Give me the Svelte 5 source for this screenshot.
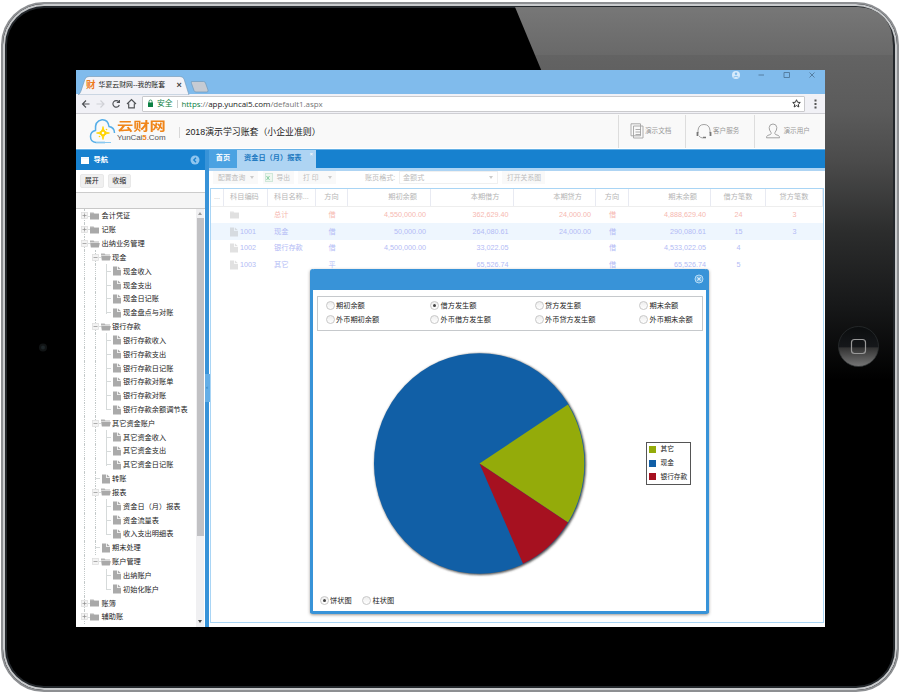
<script>
  const tree = [
    [0, '会计凭证', 'plus'], [0, '记账', 'plus'], [0, '出纳业务管理', 'minus'],
    [1, '现金', 'minus'], [2, '现金收入'], [2, '现金支出'], [2, '现金日记账'], [2, '现金盘点与对账', '', 1],
    [1, '银行存款', 'minus'], [2, '银行存款收入'], [2, '银行存款支出'], [2, '银行存款日记账'], [2, '银行存款对账单'], [2, '银行存款对账'], [2, '银行存款余额调节表', '', 1],
    [1, '其它资金账户', 'minus'], [2, '其它资金收入'], [2, '其它资金支出'], [2, '其它资金日记账', '', 1],
    [1, '转账'], [1, '报表', 'minus'], [2, '资金日（月）报表'], [2, '资金流量表'], [2, '收入支出明细表', '', 1],
    [1, '期末处理'], [1, '账户管理', 'minus', 1], [2, '出纳账户'], [2, '初始化账户', '', 1],
    [0, '账簿', 'plus'], [0, '辅助账', 'plus']
  ].map(([level, label, toggle, last], i) => ({ level, label, toggle, last, trunk: i > 2 && i < 25 }));

  const heads = ['...', '科目编码', '科目名称...', '方向', '期初余额', '本期借方', '本期贷方', '方向', '期末余额', '借方笔数', '贷方笔数'];
  const kinds = ['c', 'code', 'l', 'c', 'r', 'r', 'r', 'c', 'r', 'c', 'c'];
  const rows = [
    ['', '', '总计', '借', '4,550,000.00', '362,629.40', '24,000.00', '借', '4,888,629.40', '24', '3'],
    ['', '1001', '现金', '借', '50,000.00', '264,080.61', '24,000.00', '借', '290,080.61', '15', '3'],
    ['', '1002', '银行存款', '借', '4,500,000.00', '33,022.05', '', '借', '4,533,022.05', '4', ''],
    ['', '1003', '其它', '平', '', '65,526.74', '', '借', '65,526.74', '5', '']
  ];
  const options = ['期初余额', '借方发生额', '贷方发生额', '期末余额', '外币期初余额', '外币借方发生额', '外币贷方发生额', '外币期末余额'];
  const legend = [['其它', '#94ab0a'], ['现金', '#115fa6'], ['银行存款', '#a61120']];
</script>

{#snippet file()}
  <svg class="ficon" width="8" height="10" viewBox="0 0 8 10"><path d="M0 .5h4.2V4H8v5.500H0z M5 .5L8 3.200H5z" fill="#aaa" /></svg>
{/snippet}
{#snippet folder(open)}
  <svg class="dicon" width="10" height="8" viewBox="0 0 10 8">
    <path d="M0 .5h3.600l.8 1H9v1H0z" fill="#b4b4b4" />
    <path d={open ? 'M.2 3H9.8L8.8 7.5H.8z' : 'M0 2h9v5.5H0z'} fill="#a9a9a9" />
  </svg>
{/snippet}

<div class="tablet">
  <svg class="glare" width="900" height="696" viewBox="0 0 900 696">
    <defs>
      <linearGradient id="shine" gradientUnits="userSpaceOnUse" x1="0" y1="7" x2="0" y2="380">
        <stop offset="0" stop-color="#777" /><stop offset=".128" stop-color="#696969" />
        <stop offset=".13" stop-color="#636363" /><stop offset=".28" stop-color="#5b5b5b" />
        <stop offset=".42" stop-color="#4a4a4a" /><stop offset=".6" stop-color="#2c2d2d" />
        <stop offset=".8" stop-color="#171819" /><stop offset="1" stop-color="#000" />
      </linearGradient>
      <linearGradient id="home" x1="0" y1="0" x2="0" y2="1">
        <stop offset="0" stop-color="#0b0d0e" /><stop offset=".5" stop-color="#15171a" />
        <stop offset=".54" stop-color="#333" /><stop offset="1" stop-color="#777" />
      </linearGradient>
    </defs>
    <path d="M515 7H858Q893 9 893 46V380H670Z" fill="url(#shine)" />
    <circle cx="858.500" cy="346.500" r="20" fill="url(#home)" stroke="#2c3032" stroke-width=".7" />
    <rect x="851.500" y="339.500" width="14" height="14" rx="3" fill="none" stroke="#999" stroke-width="1.200" />
    <circle cx="43" cy="347.500" r="4" fill="#111415" /><circle cx="43" cy="347.500" r="2" fill="#1d2528" />
  </svg>

  <div class="screen">
    <div class="tabbar">
      <svg class="tabshape" width="140" height="19" viewBox="0 0 140 19">
        <path d="M2 19Q4 18 5 15L9 3Q10 .5 13 .5H104Q107 .5 108 3L113 19z" fill="#f3f3f8" stroke="#7196b4" stroke-width=".6" />
        <path d="M115.500 5.500h12q1.500 0 2 1.500l2.500 7q.5 2-1 2h-11q-1.500 0-2-1.500l-2.500-7q-.5-2 0-2z" fill="#c6cbd3" stroke="#6e9abc" stroke-width=".7" />
      </svg>
      <div class="tabtext"><b>财</b><span>华夏云财网--我的账套</span><i>×</i></div>
      <svg class="winbtns" width="90" height="12" viewBox="0 0 90 12" fill="none" stroke="#50789b" stroke-width=".9">
        <circle cx="6" cy="5" r="4" fill="#d6eafb" stroke="none" /><circle cx="6" cy="3.800" r="1.200" fill="#80bbec" stroke="none" /><path d="M3.500 7.200q2.500-2 5 0" stroke="#80bbec" />
        <path d="M28.500 5h5.500M54 2.500h5.500v5H54zM79.500 2.500l5 5m0-5l-5 5" />
      </svg>
    </div>

    <div class="addr">
      <svg width="66" height="18" viewBox="0 0 66 18" fill="none" stroke="#505256" stroke-width="1.150">
        <path d="M13.500 9H6.500M10 5.500L6.500 9l3.500 3.500" />
        <path d="M20.500 9h7.500M24.500 5.500L28 9l-3.500 3.500" stroke="#d0d1d6" />
        <path d="M42.700 6.700A3.300 3.300 0 1 0 43.300 10M43.400 5v2.500h-2.600" />
        <path d="M51 9l4.500-4.500L60 9M52.700 8.500v4.300h5.600V8.500" />
      </svg>
      <div class="field">
        <svg width="7" height="9" viewBox="0 0 7 9"><rect x="1" y="3.500" width="5" height="4.500" fill="#0b8043" /><path d="M2 4V2.500q0-1.500 1.500-1.500T5 2.500V4" fill="none" stroke="#0b8043" stroke-width=".8" /></svg>
        <span class="safe">安全</span><span class="bar"></span>
        <span class="url"><em>https</em>://<strong>app.yuncai5.com</strong>/default1.aspx</span>
        <svg class="star" width="9" height="9" viewBox="0 0 10 10"><path d="M5 .8l1.200 2.800 3 .3-2.200 2 .6 3L5 7.300 2.400 8.900l.6-3-2.200-2 3-.3z" fill="none" stroke="#333" stroke-width="1.100" /></svg>
      </div>
      <svg class="dots" width="3" height="10" viewBox="0 0 3 10" fill="#555"><path d="M.5.5h2v2h-2zM.5 4h2v2h-2zM.5 7.500h2v2h-2z" /></svg>
    </div>

    <header>
      <svg class="cloud" width="27" height="27" viewBox="0 0 27 27" fill="none">
        <path d="M16 24.500H7Q1.500 24 1.500 18.500 1.500 13.500 6.500 12.500 5.500 3 13 1.800 19 1.500 20 8.500 25.500 9.500 25.500 15" stroke="#55aee8" stroke-width="1.500" />
        <path d="M7 24.500H22" stroke="#8ac9f1" stroke-width="1" />
        <path d="M14 8.500Q14.500 14.500 20.500 15 14.500 15.500 14 21.500 13.500 15.500 7.500 15 13.500 14.500 14 8.500z" fill="#ffd400" stroke="#ffd400" stroke-width=".8" /><circle cx="14" cy="15" r="1.300" fill="#fff" />
        <circle cx="17.500" cy="11.500" r=".8" fill="#ffd400" /><circle cx="10.500" cy="18.500" r=".8" fill="#ffd400" />
      </svg>
      <div class="brand"><div class="cn">云财网</div><div class="en">YunCai<b>5</b>.Com</div></div>
      <div class="title">2018演示学习账套（小企业准则）</div>
      <div class="tool t1">
        <svg width="14" height="16" viewBox="0 0 14 16" fill="#f9f9f9" stroke="#a3a3a3" stroke-width=".9"><path d="M1 .8h9.500v12H1zM3.500 3h9.500v12H3.500zM5.500 6.500h5.500M5.500 9h5.500M5.500 11.500h5.500" /></svg><span>演示文档</span>
      </div>
      <div class="tool t2">
        <svg width="16" height="16" viewBox="0 0 16 16" fill="none" stroke="#999" stroke-width=".9"><path d="M2 10V7.500Q2.500 1.500 8 1.500T14 7.500V10M3 13q1.500 2 4 2" /><path d="M1.500 9v4M14.500 9v4" stroke="#777" stroke-width="1.800" /><path d="M7 14.500h3" stroke="#777" stroke-width="1.500" /></svg><span>客户服务</span>
      </div>
      <div class="tool t3">
        <svg width="14" height="16" viewBox="0 0 14 16" fill="none" stroke="#999" stroke-width=".9"><path d="M5 9.500Q3 7 3.200 4.500 3.500 1 7 1t3.800 3.500Q11 7 9 9.500q-.5 1.500.5 2l3 1q1 .7 1 2.300H.5q0-1.600 1-2.300l3-1q1-.5.5-2z" /></svg><span>演示用户</span>
      </div>
    </header>

    <div class="body">
      <aside>
        <div class="navhead">
          <svg width="8" height="7" viewBox="0 0 8 7"><path d="M0 0h8v7H0z" fill="#fff" /><path d="M0 1.200h8" stroke="#cde5f7" stroke-width=".5" /></svg>
          <b>导航</b>
          <svg class="coll" width="10" height="10" viewBox="0 0 10 10"><circle cx="5" cy="5" r="4.500" fill="#8fc5ee" /><path d="M6 2.700L3.800 5 6 7.300" fill="none" stroke="#1781cf" stroke-width="1.300" /></svg>
        </div>
        <div class="btns"><span>展开</span><span>收缩</span></div>
        <div class="strip"></div>
        <div class="treewrap">
          <div class="tree">
            {#each tree as n}
              <div class="node lv{n.level}" class:trunk={n.trunk} class:last={n.last}>
                <span class="guide" class:tog={n.toggle}>
                  {#if n.toggle}<svg width="7" height="7" viewBox="0 0 7 7" fill="#f3f3f3" stroke-width=".7"><rect x=".5" y=".5" width="6" height="6" stroke="#dcdcdc" /><path d={n.toggle === 'plus' ? 'M1.500 3.500h4M3.500 1.500v4' : 'M1.500 3.500h4'} stroke="#8c8c8c" /></svg>{/if}
                </span>
                {#if n.toggle}{@render folder(n.toggle === 'minus')}{:else}{@render file()}{/if}
                <span class="label">{n.label}</span>
              </div>
            {/each}
          </div>
          <div class="scroll"><i class="up"></i><div class="thumb"></div><i class="down"></i></div>
        </div>
      </aside>
      <div class="split"><div class="grip">‹</div></div>
      <main>
        <div class="tabs"><span class="home">首页</span><span class="active">资金日（月）报表<i>×</i></span></div>
        <div class="bar2">
          <span class="b wide">配置查询<u></u></span>
          <span class="b exp"><svg width="8" height="9" viewBox="0 0 8 9"><rect x=".5" y=".5" width="7" height="8" fill="#eef7ef" stroke="#d0e8da" /><path d="M1.500 3l3 4m0-4l-3 4" stroke="#8bd0a5" /></svg>导出</span>
          <span class="b prn">打 印<u></u></span>
          <span class="lab">账页格式:</span>
          <span class="combo">金额式<u></u></span>
          <span class="b rel">打开关系图</span>
        </div>
        <div class="grid">
          <div class="row head">{#each heads as h, i}<span class={kinds[i]}>{h}</span>{/each}</div>
          {#each rows as r, ri}
            <div class="row" class:total={ri === 0} class:sel={ri === 1}>
              {#each r as c, i}
                <span class={kinds[i]}>{#if i === 1}{#if ri}{@render file()}{:else}{@render folder(false)}{/if}{/if}{c}</span>
              {/each}
            </div>
          {/each}
        </div>
      </main>
    </div>

    <div class="modal">
      <div class="mhead"><svg width="10" height="10" viewBox="0 0 10 10"><circle cx="5" cy="5" r="4" fill="#5eabe3" stroke="#b4daf5" stroke-width="1" /><path d="M3.300 3.300l3.400 3.400m0-3.400L3.300 6.700" stroke="#d5eafa" stroke-width="1.100" /></svg></div>
      <div class="mbody">
        <div class="opts">{#each options as o, i}<label><i class="radio" class:on={i === 1}></i>{o}</label>{/each}</div>
        <div class="chart">
          <svg width="220" height="230" viewBox="370 350 220 230">
            <defs><filter id="soft"><feGaussianBlur stdDeviation=".8" /></filter></defs>
            <ellipse cx="480.300" cy="464.300" rx="105.800" ry="110.800" fill="#555" filter="url(#soft)" />
            <ellipse cx="479.500" cy="463.500" rx="105.500" ry="110.300" fill="#115fa6" />
            <path d="M479.500 463.500L568 404.500A105.500 110.300 0 0 1 568 522.500Z" fill="#94ab0a" />
            <path d="M479.500 463.500L568 522.500A105.500 110.300 0 0 1 523 563.800Z" fill="#a61120" />
          </svg>
          <div class="legend">{#each legend as [name, color]}<div><i style="background:{color}"></i>{name}</div>{/each}</div>
        </div>
        <div class="foot"><label><i class="radio on"></i>饼状图</label><label><i class="radio"></i>柱状图</label></div>
      </div>
    </div>
  </div>
</div>

<style>
  :global(body) { background: #fff; overflow: hidden; }
  .tablet, .tablet *, .tablet::before { box-sizing: border-box; }
  svg { flex: none; display: block; }
  .tablet { position: relative; width: 900px; height: 696px; background: #fff; padding: 70px 75px 0 76px; font: 7.2px/10px "Liberation Sans", "Noto Sans CJK SC", sans-serif; color: #222; white-space: nowrap; z-index: 0; }
  .tablet::before { content: ''; position: absolute; z-index: -2; left: 1px; top: 2px; width: 898px; height: 690px; border-radius: 43px; background: #000; border: 2px solid #8d8f92; box-shadow: inset 0 0 0 2px #c9cbcd, inset 0 0 0 4px #24282c; }
  .glare { position: absolute; left: 0; top: 0; z-index: -1; }
  .screen { position: relative; width: 749px; height: 557px; background: #fff; overflow: hidden; display: flex; flex-direction: column; }

  .tabbar { position: relative; height: 24px; background: #80bbec; flex: none; padding: 6px 0 0 8px; }
  .tabshape { position: absolute; left: 0; top: 6px; }
  .tabtext { position: relative; display: flex; align-items: center; height: 18px; color: #444; }
  .tabtext b { color: #ef7b1c; font-size: 9.500px; width: 14.500px; padding-left: 2px; }
  .tabtext span { width: 78px; font-size: 6.900px; color: #222; }
  .tabtext i { font: 700 9px/10px "Liberation Sans", sans-serif; color: #444; }
  .winbtns { position: absolute; left: 654px; top: 0; }
  .addr { height: 20px; flex: none; background: #f1f1f6; border-bottom: 1px solid #cfcfd4; display: flex; align-items: center; }
  .field { width: 663px; height: 16px; background: #fff; border: 1px solid #cacacd; border-radius: 1px; display: flex; align-items: center; padding: 0 4px 0 4px; }
  .safe { color: #0b8043; font-size: 7.800px; margin-left: 3px; width: 19.500px; }
  .bar { width: 1px; height: 8px; background: #ccc; margin-right: 4px; }
  .url { font: 8px/12px "Open Sans", sans-serif; letter-spacing: -.07px; color: #777; width: 142px; }
  .url em { font-style: normal; color: #0b8043; }
  .url strong { font-weight: 400; color: #222; }
  .star { margin-left: auto; margin-right: -1px; }
  .dots { margin-left: 9px; }

  header { height: 35px; flex: none; background: #f9f9f9; display: flex; align-items: center; border-bottom: 1px solid #fff; padding-left: 13px; }
  .brand { width: 63px; padding-left: 1px; }
  .cn { font: 700 16.300px/12px "Noto Sans CJK SC", sans-serif; color: #f08519; transform: scaleY(.76); height: 12px; }
  .en { font: 8px/8px "Liberation Sans", sans-serif; letter-spacing: -.08px; color: #555; margin-top: 1.500px; }
  .en b { color: #f08519; }
  .title { border-left: 1px solid #d8d8d8; padding-left: 5.500px; font-size: 8.900px; line-height: 11px; height: 11px; margin-top: 2px; width: 439px; color: #222; }
  .tool { border-left: 1px solid #ddd; height: 33px; display: flex; align-items: center; padding-left: 11px; color: #999; font-size: 6.600px; }
  .tool span { margin-left: 1px; }
  .t1 { width: 67px; } .t2 { width: 68.500px; padding-left: 10px; } .t3 { width: 71px; } .t3 span { margin-left: 4px; }

  .body { flex: 1; min-height: 0; display: flex; border-top: 1px solid #65b1e6; }
  aside { width: 129px; display: flex; flex-direction: column; }
  .navhead { height: 20px; flex: none; background: #1781cf; color: #fff; display: flex; align-items: center; padding: 0 5px 0 5px; }
  .navhead b { margin-left: 4.500px; font-size: 7.300px; }
  .coll { margin-left: auto; }
  .btns { height: 22px; flex: none; padding: 4px 0 0 4px; display: flex; gap: 4px; }
  .btns span { width: 23.500px; height: 14px; background: #f0f0f0; border: 1px solid #e8e8e8; border-radius: 2px; text-align: center; line-height: 12px; font-size: 7px; }
  .strip { height: 17px; flex: none; background: #f5f5f5; border-top: 1px solid #ccc; border-bottom: 1px solid #c8c8c8; }
  .treewrap { flex: 1; min-height: 0; display: flex; overflow: hidden; }
  .tree { width: 120px; padding-top: 0; }
  .node { position: relative; height: 13.830px; display: flex; align-items: center; padding-left: 5px; }
  .node.lv1 { padding-left: 16px; } .node.lv2 { padding-left: 27px; }
  .node::before { content: ''; position: absolute; left: 8px; top: 0; bottom: 0; border-left: 1px dotted #c3c9c9; }
  .node.trunk::after { content: ''; position: absolute; left: 19px; top: 0; bottom: 0; border-left: 1px dotted #c3c9c9; }
  .guide { position: relative; width: 9px; height: 13.830px; display: flex; align-items: center; z-index: 1; flex: none; }
  .guide::after { content: ''; position: absolute; left: 3px; right: 1px; top: 6.500px; border-top: 1px solid #d6dada; }
  .guide.tog::after { left: 7px; right: 0; }
  .lv2 .guide::before { content: ''; position: absolute; left: 3px; top: 0; bottom: 0; border-left: 1px solid #d6dada; }
  .lv2.last .guide::before { bottom: 6px; }
  .ficon { margin-left: 1px; width: 8px; }
  .dicon { width: 10px; }
  .label { margin-left: 1.500px; line-height: 13px; }
  .lv1 .label { margin-left: 1px; }
  .lv1 .ficon + .label, .lv2 .label { margin-left: 2px; }
  .scroll { width: 8px; background: #f0f0f2; display: flex; flex-direction: column; align-items: center; padding: 3px 0 4px; }
  .thumb { width: 7px; height: 318px; background: #c1c1c4; margin: 3px 0 auto; }
  .up { border: 2px solid transparent; border-top: 0; border-bottom: 3px solid #999; }
  .down { border: 2px solid transparent; border-bottom: 0; border-top: 3px solid #444; }
  .split { width: 4px; background: #3893d8; padding-top: 224px; }
  .grip { height: 28px; width: 5px; background: #64aee6; color: #1d6fae; font-size: 6px; line-height: 27px; padding-left: 1px; }

  main { flex: 1; min-width: 0; display: flex; flex-direction: column; padding-left: 1px; }
  .tabs { height: 20.500px; flex: none; background: #1781cf; border-bottom: 3px solid #aed4f3; display: flex; margin-left: -1px; line-height: 16px; }
  .home { width: 28px; background: #4ba2e2; color: #fff; font-weight: 700; text-align: center; }
  .active { position: relative; width: 79px; background: #aed4f3; color: #1b78c0; padding-left: 7px; font-weight: 700; height: 18px; }
  .active i { position: absolute; right: 3px; top: -4px; font: 6px/17px "Liberation Sans", sans-serif; color: #fff; }
  .bar2 { height: 17.500px; flex: none; display: flex; align-items: center; color: #bdbdbd; font-size: 6.800px; padding: 0 0 3px 3px; }
  .b { background: #f9f9f9; height: 13px; line-height: 13px; display: flex; align-items: center; padding-left: 5px; flex: none; }
  .wide { width: 45px; } .exp { width: 31px; margin-left: 5px; padding-left: 2px; gap: 3.500px; } .prn { width: 38px; margin-left: 4px; }
  u { border: 2px solid transparent; border-top: 3px solid #ccc; border-bottom: 0; margin-left: auto; margin-right: 4px; }
  .lab { width: 34px; margin-left: 29px; font-size: 7.100px; }
  .combo { width: 99px; height: 13px; border: 1px solid #f0f0f0; padding-left: 3px; display: flex; align-items: center; font-size: 7.100px; }
  .rel { width: 43px; margin-left: 4px; }
  .grid { flex: 1; margin: 0 1px 4px 0; border: 1px solid #a9d5f5; }
  .row { display: grid; grid-template-columns: 13px 44px 48px 32px 83px 82.500px 82.500px 33px 82px 55px 57px; height: 16.700px; align-items: center; color: #b3bbf5; }
  .row > span { height: 100%; display: flex; align-items: center; }
  .row.head { height: 17.500px; color: #b5b5b5; border-bottom: 1px solid #eee; }
  .head > span { border-right: 1px solid #e8eaf2; }
  .row.total { color: #f6b8b0; }
  .row.sel { background: #eef6fe; }
  .c { justify-content: center; }
  .l { padding-left: 6px; }
  .r { justify-content: flex-end; padding-right: 5px; }
  .head .r { padding-right: 13px; }
  .row .code { padding-left: 6px; }
  .row .code :global(svg) { opacity: .35; margin: 0 2px 0 0; }

  .modal { position: absolute; left: 234px; top: 199px; width: 399px; height: 345px; border: 3px solid #3893d8; border-top: 0; border-radius: 3px; background: #fff; box-shadow: 0 1px 3px rgba(60, 50, 40, .5); display: flex; flex-direction: column; }
  .mhead { height: 20.500px; flex: none; background: #3893d8; display: flex; align-items: center; justify-content: flex-end; padding-right: 3px; margin: 0 -1px; border-radius: 2px 2px 0 0; }
  .mbody { flex: 1; padding: 6px 3px 0 4px; display: flex; flex-direction: column; }
  .opts { height: 35px; width: 386px; border: 1px solid #c6c9cc; display: grid; grid-template-columns: repeat(3, 104.500px) 1fr; grid-template-rows: 14px 14px; padding: 2px 0 0 7.500px; }
  label { display: flex; align-items: center; gap: 1.500px; }
  .radio { width: 9px; height: 9px; border: 1px solid #c8c8c8; border-radius: 50%; background: linear-gradient(#eee, #fff); display: flex; align-items: center; justify-content: center; }
  .radio.on::after { content: ''; width: 3px; height: 3px; border-radius: 50%; background: #444; }
  .chart { display: flex; height: 265px; padding: 19px 0 0 53px; }
  .legend { width: 45px; height: 43px; border: 1px solid #555; margin: 92px 0 0 56px; padding: 0 0 0 2px; font-size: 6.700px; flex: none; }
  .legend div { display: flex; align-items: center; height: 13.700px; gap: 4.500px; }
  .legend i { width: 7px; height: 7px; }
  .foot { display: flex; gap: 10.500px; padding-left: 2.500px; }
</style>
